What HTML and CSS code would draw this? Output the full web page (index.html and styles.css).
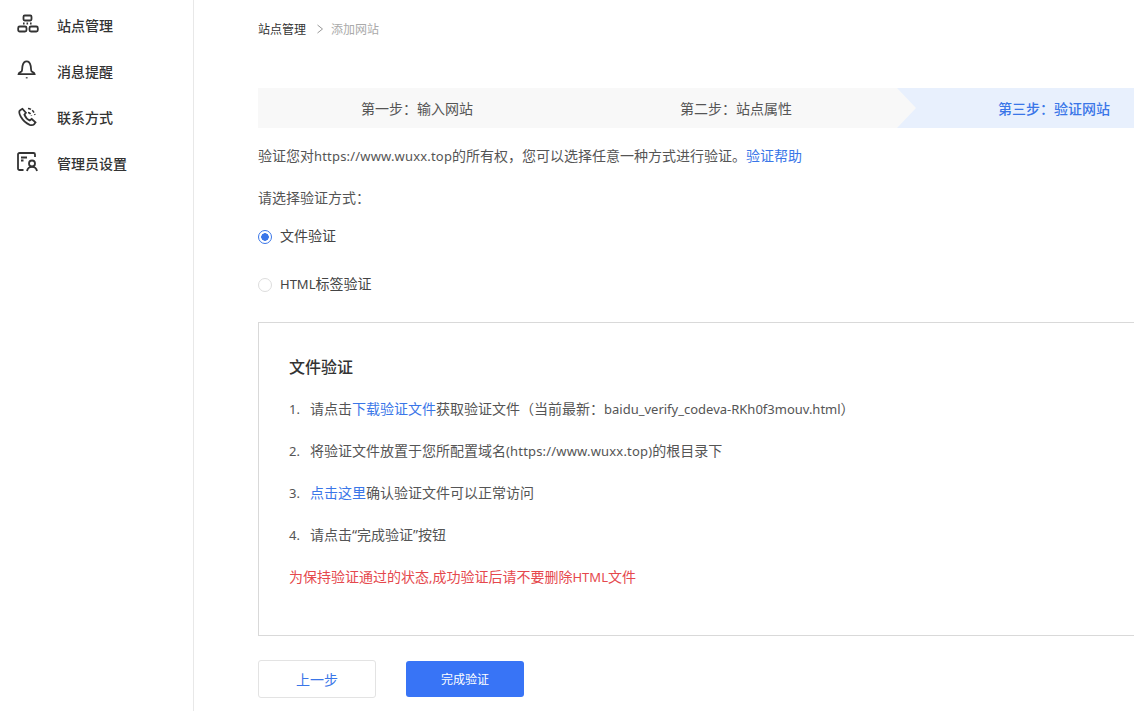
FILE: index.html
```html
<!DOCTYPE html>
<html lang="zh">
<head>
<meta charset="utf-8">
<title>添加网站</title>
<link rel="stylesheet" href="styles.css">
</head>
<body>
<div class="app">
  <aside class="sidebar">
    <a class="nav-item">
      <svg class="nav-icon" viewBox="0 0 22 22"><rect x="6.500" y="1.500" width="8" height="5" rx="1.200"/><rect x="1.200" y="12.500" width="8.300" height="5" rx="1.500"/><rect x="12.500" y="12.500" width="8.300" height="5" rx="1.500"/><path class="dots" d="M6 9.500h1.600M9.500 9.500h1.600M13 9.500h1.600"/></svg>
      <span>站点管理</span>
    </a>
    <a class="nav-item">
      <svg class="nav-icon" viewBox="0 0 22 22"><path d="M1.500 14.200c0-1.600 1.600-2 3-2.700 1-1 .5-3.200 1-5.500.5-2.500 2-4.600 4.200-4.600 2.100 0 3.500 2.100 4 4.600.5 2.300 0 4.500 1 5.500 1.400.7 3 1.100 3 2.700z"/><path d="M9.700 17.200v1.200"/></svg>
      <span>消息提醒</span>
    </a>
    <a class="nav-item">
      <svg class="nav-icon" viewBox="0 0 22 22"><path d="M5.500 2.800 3.200 4.200c-1.500 1-1 3.500.5 6.300 2 3.500 5.300 6.800 9 8.300 2 .7 3.300.5 4.300-.5l1.500-2-3.800-3.300-2 1.500c-2-.8-4.300-3.300-5.300-5.800l1.500-2z"/><path class="arcs" d="M11 2.500c3.500.4 6 2.800 7 6.500M11 6.500c1.800.3 3 1.500 3.500 3.300"/></svg>
      <span>联系方式</span>
    </a>
    <a class="nav-item">
      <svg class="nav-icon" viewBox="0 0 22 22"><path d="M6.500 18H2.500A1.500 1.500 0 0 1 1 16.500V2.500A1.500 1.500 0 0 1 2.500 1h14A1.500 1.500 0 0 1 18 2.500V5M4 5.500h6M4 8.500h2.500"/><circle cx="15" cy="11.500" r="3"/><path d="M10 19c.5-2.500 2.500-4.200 5-4.200s4.500 1.700 5 4.200"/></svg>
      <span>管理员设置</span>
    </a>
  </aside>
  <main class="main">
    <nav class="crumbs">
      <span class="crumb-root">站点管理</span>
      <svg class="crumb-sep" viewBox="0 0 8 10"><path d="M1.500 1l5 4-5 4"/></svg>
      <span class="crumb-current">添加网站</span>
    </nav>
    <div class="steps">
      <div class="step step-one">第一步：输入网站</div>
      <div class="step step-two">第二步：站点属性</div>
      <div class="step step-three">第三步：验证网站</div>
    </div>
    <p class="intro">验证您对<span class="en url">https://www.wuxx.top</span>的所有权，您可以选择任意一种方式进行验证。<a class="link">验证帮助</a></p>
    <p class="choose">请选择验证方式：</p>
    <div class="radio-row radio-first"><span class="radio radio-on"></span><span>文件验证</span></div>
    <div class="radio-row radio-second"><span class="radio"></span><span><span class="en">HTML</span>标签验证</span></div>
    <section class="panel">
      <h2 class="panel-title">文件验证</h2>
      <ol class="panel-list">
        <li><span class="num">1.</span><span>请点击<a class="link">下载验证文件</a>获取验证文件（当前最新：<span class="en">baidu_verify_codeva-RKh0f3mouv.html</span>）</span></li>
        <li><span class="num">2.</span><span>将验证文件放置于您所配置域名<span class="en url">(https://www.wuxx.top)</span>的根目录下</span></li>
        <li><span class="num">3.</span><span><a class="link">点击这里</a>确认验证文件可以正常访问</span></li>
        <li><span class="num">4.</span><span>请点击“完成验证”按钮</span></li>
      </ol>
      <p class="warning">为保持验证通过的状态<span class="en">,</span>成功验证后请不要删除<span class="en">HTML</span>文件</p>
    </section>
    <div class="actions">
      <button class="btn btn-ghost">上一步</button>
      <button class="btn btn-primary">完成验证</button>
    </div>
  </main>
</div>
</body>
</html>
```
FILE: styles.css
```css
* { box-sizing: border-box; }
html, body { margin: 0; height: 100%; overflow: hidden; background: #fff; }
body { font-family: "Noto Sans", "Noto Sans CJK SC", sans-serif; color: #555; font-size: 14px; }
.app { display: flex; height: 711px; width: 1134px; overflow: hidden; }
.en { font-size: 13px; }
.url { letter-spacing: .18px; }
.sidebar { width: 194px; flex: none; border-right: 1px solid #e8e8e8; display: flex; flex-direction: column; gap: 22px; padding-top: 13px; }
.nav-item { display: flex; align-items: center; height: 24px; padding-left: 17px; font-size: 14px; font-weight: 500; color: #333; gap: 18px; }
.nav-icon { width: 22px; height: 22px; fill: none; stroke: #333; stroke-width: 1.800; flex: none; }
.dots { stroke-dasharray: 1.600 1.800; }
.arcs { stroke-width: 1.500; stroke-dasharray: 3 1.500; }
.main { flex: 1; min-width: 0; padding-left: 64px; display: flex; flex-direction: column; }
.crumbs { display: flex; align-items: center; height: 20px; margin-top: 19px; font-size: 12px; }
.crumb-root { color: #333; }
.crumb-sep { width: 8px; height: 10px; margin: 0 7px 0 10px; fill: none; stroke: #999; stroke-width: 1; }
.crumb-current { color: #aaa; }
.steps { display: flex; height: 40px; margin-top: 49px; margin-right: -1px; background: #f8f8f8; font-size: 14px; }
.step { display: flex; align-items: center; flex: none; }
.step-one { width: 319.500px; padding-left: 103px; }
.step-two { width: 319.500px; padding-left: 102.500px; }
.step-three { flex: 1; padding-left: 101px; color: #3a76e8; font-weight: 500; background: #e8f0fd; clip-path: polygon(0 0, 100% 0, 100% 100%, 0 100%, 19px 50%); }
.intro { margin: 18px 0 0; line-height: 20px; }
.link { color: #3a76e8; }
.choose { margin: 22px 0 0; line-height: 20px; }
.radio-row { display: flex; align-items: center; gap: 8px; height: 20px; color: #444; }
.radio-first { margin-top: 17px; }
.radio-second { margin-top: 28px; }
.radio { width: 14px; height: 14px; border: 1px solid #ddd; border-radius: 50%; flex: none; background: #fff; margin-top: 3px; }
.radio-on { border-color: #3a76e8; background: radial-gradient(circle, #3a76e8 0 3.500px, #fff 4px); }
.panel { margin-top: 29px; height: 314px; margin-right: -1px; border: 1px solid #d9d9d9; border-right: 0; padding: 31px 0 0 30px; }
.panel-title { margin: 0; font-size: 16px; line-height: 26px; font-weight: 500; color: #333; }
.panel-list { list-style: none; margin: 19px 0 0; padding: 0; display: flex; flex-direction: column; gap: 22px; }
.panel-list li { display: flex; line-height: 20px; }
.num { width: 21px; flex: none; font-size: 13px; }
.warning { margin: 22px 0 0; line-height: 20px; color: #e5484d; }
.actions { display: flex; gap: 30px; margin-top: 24px; align-items: center; }
.btn { width: 118px; font: inherit; border-radius: 3px; }
.btn-ghost { height: 38px; background: #fff; border: 1px solid #e3e3e3; color: #3a76e8; font-size: 14px; }
.btn-primary { height: 36px; background: #3874f6; border: 0; color: #fff; font-size: 12px; }
```
